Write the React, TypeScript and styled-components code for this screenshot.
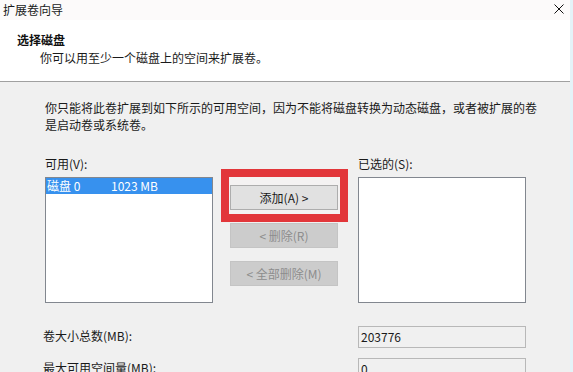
import React from "react";
import styled, { createGlobalStyle } from "styled-components";

const Global = createGlobalStyle`
  html, body { margin: 0; padding: 0; background: #f0f0f0; }
  body {
    font-family: "Noto Sans CJK SC", "Noto Sans", "Liberation Sans", sans-serif;
    font-size: 12px;
    color: #1a1a1a;
  }
`;

const Window = styled.div`
  width: 573px;
  height: 372px;
  overflow: hidden;
  display: flex;
  flex-direction: column;
  background: #f0f0f0;
  border-right: 3px solid #e4f3f8;
  box-sizing: border-box;
  & > * { flex-shrink: 0; }
`;

const TitleBar = styled.div`
  height: 20px;
  display: flex;
  align-items: center;
  justify-content: space-between;
  padding: 0 6px 0 3px;
  background: #fcfafa;
  line-height: 16px;
`;

const CloseGlyph = styled.svg`
  width: 10px;
  height: 10px;
  margin-top: -2px;
`;

const Header = styled.div`
  height: 62px;
  background: #ffffff;
  border-bottom: 1px solid #a0a0a0;
  padding-top: 11px;
  box-sizing: border-box;
  line-height: 18px;
`;

const HeaderTitle = styled.div`
  font-weight: 700;
  padding-left: 17px;
  color: #111;
`;

const HeaderSub = styled.div`
  padding-left: 40px;
`;

const Body = styled.div`
  padding: 17px 0 0 45px;
  display: flex;
  flex-direction: column;
`;

const Para = styled.p`
  margin: 0;
  width: 495px;
  line-height: 17px;
`;

const Columns = styled.div`
  display: flex;
  margin-top: 22px;
`;

const Column = styled.div`
  display: flex;
  flex-direction: column;
  width: 168px;
`;

const Label = styled.div`
  line-height: 17px;
  height: 17px;
  margin-bottom: 5px;
`;

const ListBox = styled.div`
  width: 168px;
  height: 126px;
  background: #ffffff;
  border: 1px solid #82878f;
  box-sizing: border-box;
  padding: 0;
`;

const ListItem = styled.div<{ $selected?: boolean }>`
  display: flex;
  height: 16px;
  line-height: 16px;
  padding-left: 1px;
  background: ${(p) => (p.$selected ? "#3791ee" : "transparent")};
  color: ${(p) => (p.$selected ? "#ffffff" : "#1a1a1a")};
`;

const Cell = styled.span<{ $w: number }>`
  width: ${(p) => p.$w}px;
  white-space: pre;
`;

const Middle = styled.div`
  position: relative;
  display: flex;
  flex-direction: column;
  gap: 13px;
  margin: 30px 20px 0 17px;
  width: 108px;
`;

const Button = styled.button<{ $disabled?: boolean }>`
  width: 108px;
  height: 25px;
  font-family: inherit;
  font-size: 12px;
  padding: 0;
  box-sizing: border-box;
  border: 1px solid ${(p) => (p.$disabled ? "#c4c4c4" : "#adadad")};
  background: ${(p) => (p.$disabled ? "#cccccc" : "#e1e1e1")};
  color: ${(p) => (p.$disabled ? "#8d8d8d" : "#1a1a1a")};
  position: relative;
  z-index: 1;
`;

const Highlight = styled.div`
  position: absolute;
  left: -9px;
  top: -16px;
  width: 127px;
  height: 53px;
  border: 8px solid #e2363a;
  box-sizing: border-box;
  background: #f4f2f2;
  z-index: 0;
`;

const Stats = styled.div`
  display: grid;
  grid-template-columns: 315px 168px;
  row-gap: 10px;
  margin: 23px 0 0 -2px;
  align-items: start;
`;

const StatLabel = styled.div`
  line-height: 20px;
`;

const StatBox = styled.div`
  height: 22px;
  line-height: 20px;
  background: #f0f0f0;
  border: 1px solid #b8b8b8;
  box-sizing: border-box;
  padding-left: 2px;
`;

export default function App() {
  return (
    <>
      <Global />
      <Window>
        <TitleBar>
          <span>扩展卷向导</span>
          <CloseGlyph viewBox="0 0 10 10">
            <path d="M0.5 0.5 L9.5 9.5 M9.5 0.5 L0.5 9.5" stroke="#111" strokeWidth="1" fill="none" />
          </CloseGlyph>
        </TitleBar>
        <Header>
          <HeaderTitle>选择磁盘</HeaderTitle>
          <HeaderSub>你可以用至少一个磁盘上的空间来扩展卷。</HeaderSub>
        </Header>
        <Body>
          <Para>
            你只能将此卷扩展到如下所示的可用空间，因为不能将磁盘转换为动态磁盘，或者被扩展的卷是启动卷或系统卷。
          </Para>
          <Columns>
            <Column>
              <Label>可用(V):</Label>
              <ListBox>
                <ListItem $selected>
                  <Cell $w={64}>磁盘 0</Cell>
                  <Cell $w={90}>1023 MB</Cell>
                </ListItem>
              </ListBox>
            </Column>
            <Middle>
              <Highlight />
              <Button>添加(A) &gt;</Button>
              <Button $disabled>&lt; 删除(R)</Button>
              <Button $disabled>&lt; 全部删除(M)</Button>
            </Middle>
            <Column>
              <Label>已选的(S):</Label>
              <ListBox />
            </Column>
          </Columns>
          <Stats>
            <StatLabel>卷大小总数(MB):</StatLabel>
            <StatBox>203776</StatBox>
            <StatLabel>最大可用空间量(MB):</StatLabel>
            <StatBox>0</StatBox>
          </Stats>
        </Body>
      </Window>
    </>
  );
}
